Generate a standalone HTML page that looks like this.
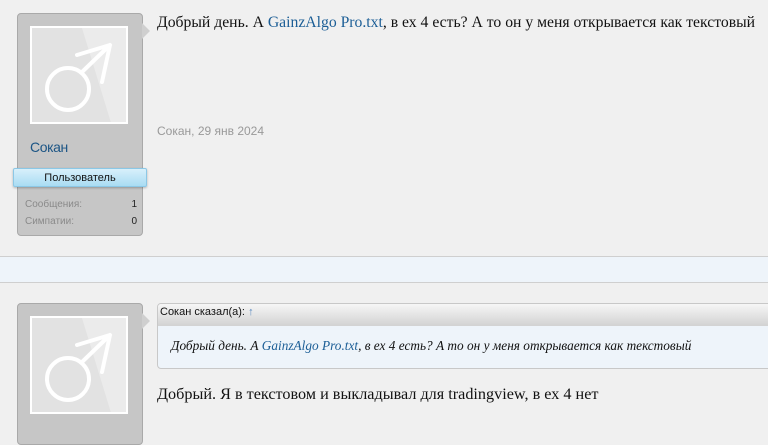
<!DOCTYPE html><html><head><meta charset="utf-8"><style>
body{margin:0;width:768px;height:419px;background:#f0f0f0;position:relative;overflow:hidden;font-family:"Liberation Sans",sans-serif}
.ub{position:absolute;left:17px;width:124px;background:#c6c6c6;border:1px solid #a9a9a9;border-radius:4px}
.av{position:absolute;left:12px;top:12px;width:98px;height:98px;background:#e2e2e2;border:2px solid #fff;box-sizing:border-box;overflow:hidden}
.arrow{position:absolute;left:142px;width:0;height:0;border-top:8px solid transparent;border-bottom:8px solid transparent;border-left:8px solid #cfcfcf}
.name{position:absolute;left:12px;top:125px;color:#1c5585;font-size:14px;letter-spacing:-0.4px}
.ban{position:absolute;left:13px;top:168px;width:132px;height:17px;background:linear-gradient(#d8f0fb,#a9dcf3);border:1px solid #8cc8e6;border-radius:2px;font-size:11px;text-align:center;line-height:18px;color:#111;box-shadow:0 1px 2px rgba(0,0,0,.25)}
.st{position:absolute;left:7px;width:112px;font-size:10px;color:#8a8a8a}
.st b{float:right;color:#222;font-weight:normal}
.t{position:absolute;font-family:"Liberation Serif",serif;font-size:15.7px;color:#111;white-space:nowrap}
a{color:#1c5e96;text-decoration:none}
</style></head><body>
<div class="ub" style="top:13px;height:221px">
<div class="av"><svg width="98" height="98" viewBox="0 0 98 98"><polygon points="50,0 98,0 98,98 80,98" fill="#ebebeb"/><g fill="none" stroke="#fff" stroke-width="4" stroke-linecap="round" stroke-linejoin="round"><circle cx="36" cy="61" r="21"/><path d="M50 44 L78 17 M45 27 L78 17 L70 54"/></g></svg></div>
<div class="name">Сокан</div><div style="position:absolute;left:13px;top:148px;font-size:10px">.</div>
<div class="st" style="top:185px">Сообщения:<b>1</b></div>
<div class="st" style="top:202px">Симпатии:<b>0</b></div>
</div>
<div class="ban">Пользователь</div>
<div class="arrow" style="top:23px"></div>
<div class="t" style="left:157px;top:14px">Добрый день. А <a>GainzAlgo Pro.txt</a>, в ех 4 есть? А то он у меня открывается как текстовый</div>
<div style="position:absolute;left:157px;top:124px;font-size:12px;color:#999">Сокан, 29 янв 2024</div>
<div style="position:absolute;left:0;top:256px;width:768px;height:25px;background:#eef4fa;border-top:1px solid #cfcfcf;border-bottom:1px solid #cfcfcf"></div>
<div class="ub" style="top:303px;height:140px">
<div class="av"><svg width="98" height="98" viewBox="0 0 98 98"><polygon points="50,0 98,0 98,98 80,98" fill="#ebebeb"/><g fill="none" stroke="#fff" stroke-width="4" stroke-linecap="round" stroke-linejoin="round"><circle cx="36" cy="61" r="21"/><path d="M50 44 L78 17 M45 27 L78 17 L70 54"/></g></svg></div>
</div>
<div class="arrow" style="top:313px"></div>
<div style="position:absolute;left:157px;top:303px;width:620px;height:64px;border:1px solid #c8c8c8;border-radius:4px;background:#eef4fa;overflow:hidden">
<div style="height:22px;background:linear-gradient(#f6f6f6,#d2d2d2);font-size:11px;line-height:16px;padding-left:2px;color:#111">Сокан сказал(а): <span style="color:#5a8ac0">↑</span></div>
<div class="t" style="left:13px;top:34px;font-size:13.3px;font-style:italic">Добрый день. А <a>GainzAlgo Pro.txt</a>, в ех 4 есть? А то он у меня открывается как текстовый</div>
</div>
<div class="t" style="left:157px;top:385px;font-size:16.2px">Добрый. Я в текстовом и выкладывал для tradingview, в ех 4 нет</div>
</body></html>
